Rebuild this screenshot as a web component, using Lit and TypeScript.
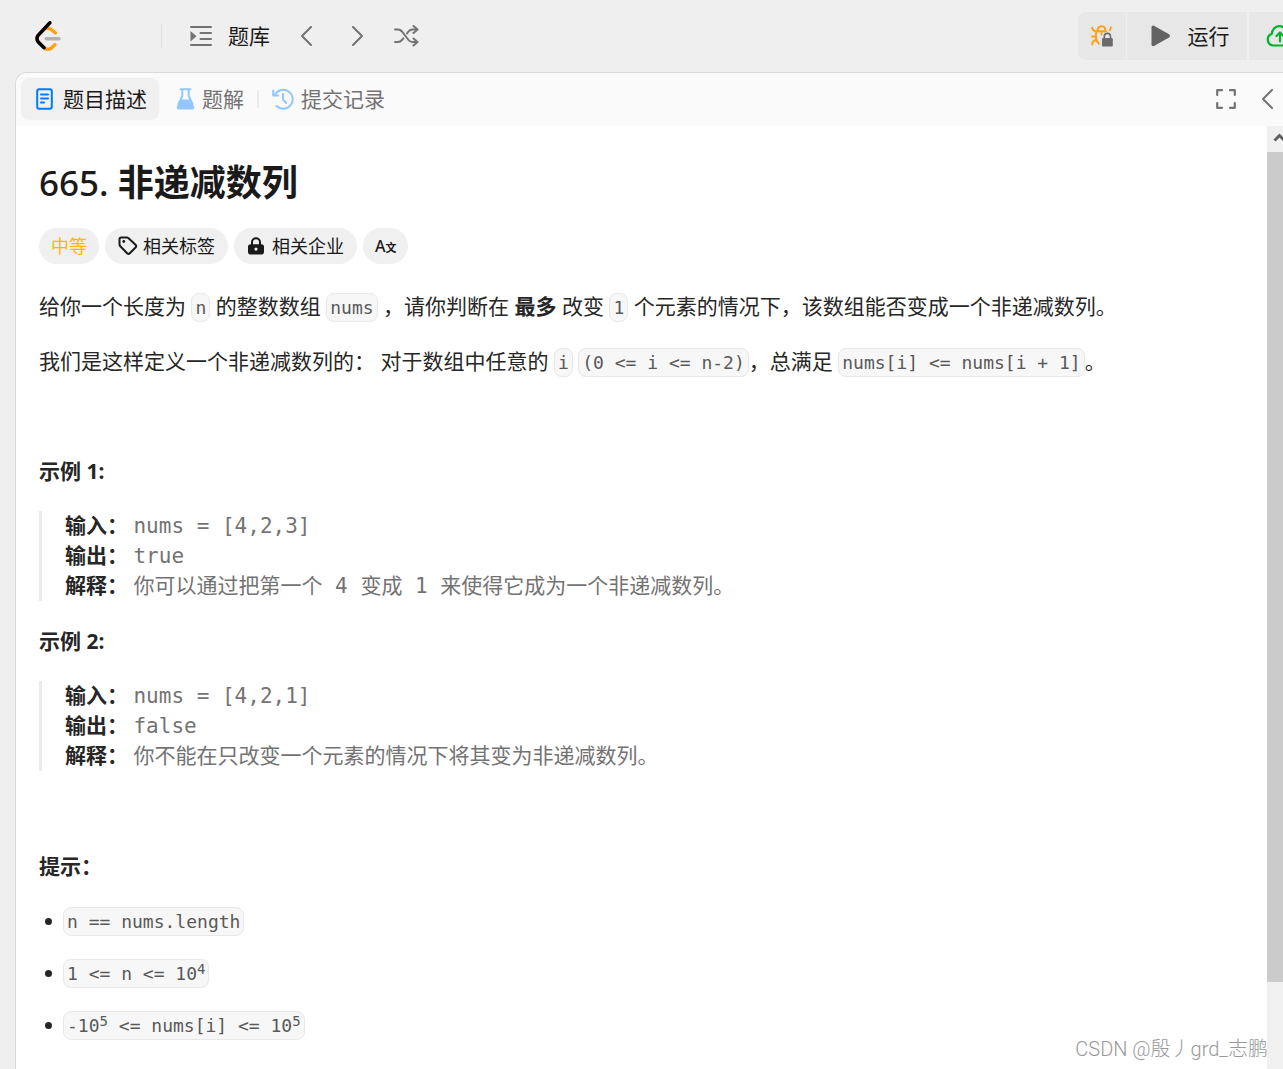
import { LitElement, html, css, TemplateResult } from "lit";
import { customElement } from "lit/decorators.js";

const listIcon = html`<svg class="icon" width="22" height="22" viewBox="0 0 22 22" aria-hidden="true">
  <path d="M1 2h20M10.500 8h10.500M10.500 14h10.500M1 20h20" fill="none" stroke="currentColor" stroke-width="2" stroke-linecap="round"/>
  <path d="M.5 6v10.500L6.500 11.200z" fill="currentColor"/></svg>`;

const chevron = (dir: "left" | "right") => html`<svg class="icon" width="12" height="20" viewBox="0 0 12 20" aria-hidden="true">
  <path d=${dir === "left" ? "M11 1L2 10l9 9" : "M1 1l9 9-9 9"} fill="none" stroke="currentColor" stroke-width="2" stroke-linecap="round" stroke-linejoin="round"/></svg>`;

const shuffleIcon = html`<svg class="icon" width="25" height="22" viewBox="0 0 25 22" aria-hidden="true">
  <g fill="none" stroke="currentColor" stroke-width="2" stroke-linecap="round" stroke-linejoin="round">
    <path d="M1 4.500h3c2 0 3 .8 4 2l6.500 8.500c1 1.300 2 2 4 2H23"/>
    <path d="M1 17h3c2 0 3-.8 4-2l1.300-1.700M13 8.500L14.500 6.500c1-1.300 2-2 4-2H23"/>
    <path d="M19.500 1L23.500 4.500l-4 3.500M19.500 13.500l4 3.500-4 3.500"/>
  </g></svg>`;

const logo = html`<svg class="icon" width="26" height="30" viewBox="0 0 95 111" aria-hidden="true">
  <path fill="#ffa116" d="M68.0063 83.0664C70.5 80.5764 74.5366 80.5829 77.0223 83.0809C79.508 85.579 79.5015 89.6226 77.0078 92.1127L65.9346 103.17C55.7187 113.371 39.06 113.519 28.6718 103.513C28.6117 103.456 23.9861 98.9201 8.72653 83.957C-1.42528 74.0029 -2.43665 58.0749 7.11648 47.8464L24.9282 28.7745C34.4095 18.6219 51.887 17.5122 62.7275 26.2789L78.9048 39.362C81.6444 41.5776 82.0723 45.5985 79.8606 48.3429C77.6488 51.0873 73.635 51.5159 70.8954 49.3003L54.7182 36.2173C49.0488 31.6325 39.1314 32.2622 34.2394 37.5006L16.4274 56.5727C11.7767 61.5522 12.2861 69.574 17.6456 74.8292C28.851 85.8169 37.4869 94.2846 37.4969 94.2942C42.8977 99.496 51.6304 99.4184 56.9331 94.1234L68.0063 83.0664Z"/>
  <path fill="#b3b3b3" d="M41.1067 72.0014C37.5858 72.0014 34.7314 69.1421 34.7314 65.615C34.7314 62.0879 37.5858 59.2286 41.1067 59.2286H88.1245C91.6454 59.2286 94.4997 62.0879 94.4997 65.615C94.4997 69.1421 91.6454 72.0014 88.1245 72.0014H41.1067Z"/>
  <path fill="#000" d="M49.9118 2.02335C52.3173 -0.55232 56.3517 -0.686894 58.9228 1.72277C61.494 4.13244 61.6284 8.17385 59.2229 10.7495L16.4276 56.5729C11.7768 61.552 12.2861 69.5738 17.6453 74.8292L37.4088 94.2091C39.9249 96.6764 39.968 100.72 37.505 103.24C35.042 105.761 31.0056 105.804 28.4895 103.337L8.72593 83.9567C-1.42529 74.0021 -2.43665 58.0741 7.1169 47.8463L49.9118 2.02335Z"/></svg>`;

const debugIcon = html`<svg class="icon" width="22" height="22" viewBox="0 0 22 22" aria-hidden="true">
  <g fill="none" stroke="#ffa116" stroke-width="2" stroke-linecap="round" stroke-linejoin="round">
    <path d="M6.500 6.300C6.500 3 8 1.200 10.500 1.200S14.500 3 14.500 6.300M5.500 6.300h9.500M10.500 6.500v3"/>
    <path d="M1.200 2.800c.3 2.200 1.500 3.300 4 3.800M19.800 2.500c0 1.200-.4 2-1 2.700M1 11.500H5M1.200 19.200c0-2 1.200-3.500 3.800-4.200M5.300 7C4.300 11 4.800 15.500 8 18.800"/>
  </g>
  <path d="M13.300 13.500V11.500a3.100 3.100 0 0 1 6.200 0v2" fill="none" stroke="#6b6b6b" stroke-width="1.600"/>
  <rect x="11" y="13" width="10.800" height="8.500" rx="1.300" fill="#6b6b6b"/></svg>`;

const playIcon = html`<svg class="icon" width="19" height="22" viewBox="0 0 19 22" aria-hidden="true">
  <path d="M.5 2.300C.5 1 1.800.2 3 .8l15 8.500c1.200.7 1.200 2.500 0 3.200l-15 8.500c-1.200.6-2.500-.1-2.500-1.500z" fill="#636363"/></svg>`;

const cloudIcon = html`<svg class="icon" width="28" height="22" viewBox="0 0 28 22" aria-hidden="true">
  <g fill="none" stroke="#01b328" stroke-width="2.200" stroke-linecap="round" stroke-linejoin="round">
    <path d="M7 20.500a6 6 0 0 1-1.200-11.600C6 4.500 9 1.200 13.200 1.200c3.300 0 6 2 7.200 5.100a7 7 0 0 1 .3 14.200z"/>
    <path d="M14 16.500V8M10.500 11L14 7.500l3.500 3.500"/>
  </g></svg>`;

const docIcon = html`<svg class="icon" width="17" height="22" viewBox="0 0 17 22" aria-hidden="true">
  <g fill="none" stroke="#007aff" stroke-width="2" stroke-linecap="round">
    <rect x="1.200" y="1.200" width="14.600" height="19.600" rx="2"/>
    <path d="M5 6.500h7M5 10.500h7M5 14.500h3"/>
  </g></svg>`;

const flaskIcon = html`<svg class="icon" width="19" height="22" viewBox="0 0 19 22" aria-hidden="true">
  <path d="M4.500 1.200h10M6.300 1.500V8L2.500 16M12.700 1.500V8l3.800 8" fill="none" stroke="#94c7ff" stroke-width="2" stroke-linecap="round"/>
  <path d="M5 11.500h9l4 6.800c.8 1.500-.1 3.200-1.800 3.200H2.800c-1.700 0-2.600-1.700-1.800-3.200z" fill="#94c7ff"/></svg>`;

const historyIcon = html`<svg class="icon" width="22" height="22" viewBox="0 0 22 22" aria-hidden="true">
  <g fill="none" stroke="#94c7ff" stroke-width="2" stroke-linecap="round" stroke-linejoin="round">
    <path d="M3 6.500A9.500 9.500 0 1 1 4.500 18M11 6v5.500l3.200 3.200"/>
    <path d="M1.200 2.500v5h5"/>
  </g></svg>`;

const expandIcon = html`<svg class="icon" width="20" height="20" viewBox="0 0 20 20" aria-hidden="true">
  <path d="M1.200 6V1.200H6M14 1.200h4.800V6M18.800 14v4.800H14M6 18.800H1.200V14" fill="none" stroke="currentColor" stroke-width="2.200" stroke-linecap="round" stroke-linejoin="round"/></svg>`;

const tagIcon = html`<svg class="icon" width="20" height="20" viewBox="0 0 20 20" aria-hidden="true">
  <path d="M1.500 3.200v5.300c0 .6.200 1.100.6 1.500l7 7.200c.8.8 1.900.8 2.700 0l5.700-5.700c.8-.8.8-1.900 0-2.700l-7.200-6.700c-.4-.4-.9-.6-1.400-.6H3.200c-1 0-1.700.7-1.700 1.700z" fill="none" stroke="currentColor" stroke-width="2" stroke-linejoin="round"/>
  <circle cx="5.800" cy="5.500" r="1.400" fill="currentColor"/></svg>`;

const lockIcon = html`<svg class="icon" width="18" height="18" viewBox="0 0 18 18" aria-hidden="true">
  <path d="M5 8V5.200a4 4 0 0 1 8 0V8" fill="none" stroke="currentColor" stroke-width="2"/>
  <path fill-rule="evenodd" fill="currentColor" d="M3.500 7.200h11A2.500 2.500 0 0 1 17 9.700v5A2.800 2.800 0 0 1 14.200 17.500H3.800A2.800 2.800 0 0 1 1 14.700v-5A2.500 2.500 0 0 1 3.500 7.200zM9 10.500a1.600 1.600 0 1 0 0 3.200 1.600 1.600 0 0 0 0-3.200z"/></svg>`;

interface Example {
  input: string;
  output: string;
  reason: string;
}

const examples: Example[] = [
  { input: "nums = [4,2,3]", output: "true", reason: "你可以通过把第一个 4 变成 1 来使得它成为一个非递减数列。" },
  { input: "nums = [4,2,1]", output: "false", reason: "你不能在只改变一个元素的情况下将其变为非递减数列。" },
];

const hints: TemplateResult[] = [
  html`n == nums.length`,
  html`1 &lt;= n &lt;= 10<sup>4</sup>`,
  html`-10<sup>5</sup> &lt;= nums[i] &lt;= 10<sup>5</sup>`,
];

@customElement("problem-toolbar")
export class ProblemToolbar extends LitElement {
  static styles = css`
    :host { display: flex; justify-content: space-between; align-items: center; height: 72px; flex: none; color: #737373; overflow: hidden; }
    .icon { display: block; flex: none; }
    .nav { display: flex; align-items: center; padding-left: 35px; }
    .rule { width: 1px; height: 24px; background: #e0e0e0; margin: 0 28px 0 100px; }
    a, button { display: flex; align-items: center; border: 0; padding: 0; background: none; font: inherit; color: inherit; text-decoration: none; }
    .library { gap: 16px; margin-right: 30px; }
    .label { color: #1a1a1a; }
    .next { margin: 0 30px 0 40px; }
    .actions { display: flex; gap: 1px; }
    .actions button { height: 48px; background: #e7e7e7; justify-content: center; }
    .actions .debug { width: 48px; border-radius: 8px 0 0 8px; }
    .actions .run { width: 120px; gap: 18px; padding-left: 6px; }
    .actions .submit { width: 34px; justify-content: flex-start; padding-left: 17px; margin-left: 1px; overflow: hidden; }
  `;
  render() {
    return html`
      <nav class="nav">
        <a href="#home" aria-label="LeetCode">${logo}</a>
        <span class="rule"></span>
        <a class="library" href="#problems">${listIcon}<span class="label">题库</span></a>
        <button aria-label="上一题">${chevron("left")}</button>
        <button class="next" aria-label="下一题">${chevron("right")}</button>
        <button aria-label="随机一题">${shuffleIcon}</button>
      </nav>
      <div class="actions">
        <button class="debug" aria-label="调试">${debugIcon}</button>
        <button class="run">${playIcon}<span class="label">运行</span></button>
        <button class="submit" aria-label="提交">${cloudIcon}</button>
      </div>`;
  }
}

@customElement("panel-tabs")
export class PanelTabs extends LitElement {
  static styles = css`
    :host { display: flex; align-items: center; justify-content: space-between; box-sizing: border-box; height: 53px; padding-bottom: 2px; flex: none; background: #fafafa; color: #737373; border-radius: 12px 0 0 0; }
    .icon { display: block; flex: none; }
    .tabs, .tools { display: flex; align-items: center; }
    .tabs { padding-left: 5px; }
    .tools { gap: 25px; padding-right: 10px; }
    button { display: flex; align-items: center; gap: 7px; height: 42px; border: 0; padding: 0; background: none; font: inherit; color: inherit; }
    .tab { padding: 0 13px 0 17px; border-radius: 8px; }
    .tab.active { background: #f0f0f0; color: #1a1a1a; padding: 0 12px 0 15px; gap: 10px; }
    .rule { width: 2px; height: 18px; background: #ebebeb; margin-right: -4px; }
  `;
  render() {
    return html`
      <div class="tabs" role="tablist">
        <button class="tab active" role="tab" aria-selected="true">${docIcon}题目描述</button>
        <button class="tab" role="tab" aria-selected="false">${flaskIcon}题解</button>
        <span class="rule"></span>
        <button class="tab" role="tab" aria-selected="false">${historyIcon}提交记录</button>
      </div>
      <div class="tools">
        <button aria-label="全屏">${expandIcon}</button>
        <button aria-label="收起">${chevron("left")}</button>
      </div>`;
  }
}

@customElement("problem-description")
export class ProblemDescription extends LitElement {
  static styles = css`
    :host { display: block; flex: 1; min-width: 0; padding: 32px 23px 24px; line-height: 31px; color: #262626; }
    .icon { display: block; flex: none; }
    h1 { margin: 0 0 20px; font-size: 36px; line-height: 50px; font-weight: 700; color: #1a1a1a; }
    .number { font-size: 35px; font-weight: 500; }
    .tags { display: flex; flex-wrap: wrap; gap: 6px; margin-bottom: 27px; }
    .tag { display: flex; align-items: center; gap: 5px; height: 36px; padding: 0 13px; border: 0; border-radius: 18px; background: #f0f0f0; font: inherit; font-size: 18px; color: #1a1a1a; }
    .tag.level { color: #ffb800; padding: 0 12px; }
    .tag.company { gap: 7px; }
    .tag.translate { gap: 0; padding: 0 12px; font-size: 16px; font-weight: 500; }
    .translate .han { font-size: 11px; font-weight: 700; padding-top: 3px; line-height: 20px; }
    p { margin: 0 0 24px; }
    code { padding: 3px; border: 1px solid #e8e8e8; border-radius: 8px; background: #f7f7f7; color: #595959; font-family: "DejaVu Sans Mono", "Liberation Mono", monospace; font-size: 18px; line-height: 21px; }
    sup { font-size: 14px; line-height: 0; vertical-align: baseline; position: relative; top: -6px; }
    pre { margin: 0 0 25px; padding-left: 23px; border-left: 3px solid #ebebeb; line-height: 30px; color: #737373; font-family: "DejaVu Sans Mono", "Noto Sans CJK SC", monospace; font-size: 21px; white-space: pre-wrap; }
    pre strong { font-family: "Noto Sans", "Noto Sans CJK SC", sans-serif; line-height: 20px; color: #262626; }
    ul { display: flex; flex-direction: column; gap: 21px; margin: 0; padding-left: 6px; list-style: none; }
    li { display: flex; align-items: center; gap: 11px; height: 31px; }
    li::before { content: ""; width: 7px; height: 7px; border-radius: 50%; background: #262626; }
  `;
  private example(e: Example, i: number) {
    return html`<p><strong>示例 ${i + 1}:</strong></p>
      <pre><strong>输入： </strong>${e.input}
<strong>输出： </strong>${e.output}
<strong>解释： </strong>${e.reason}</pre>`;
  }
  render() {
    return html`
      <h1><span class="number">665. </span>非递减数列</h1>
      <div class="tags">
        <span class="tag level">中等</span>
        <button class="tag">${tagIcon}相关标签</button>
        <button class="tag company">${lockIcon}相关企业</button>
        <button class="tag translate"><span>A</span><span class="han">文</span></button>
      </div>
      <p>给你一个长度为 <code>n</code> 的整数数组 <code>nums</code> ，请你判断在 <strong>最多</strong> 改变 <code>1</code> 个元素的情况下，该数组能否变成一个非递减数列。</p>
      <p>我们是这样定义一个非递减数列的： 对于数组中任意的 <code>i</code> <code>(0 &lt;= i &lt;= n-2)</code>，总满足 <code>nums[i] &lt;= nums[i + 1]</code>。</p>
      <p>&nbsp;</p>
      ${examples.map((e, i) => this.example(e, i))}
      <p>&nbsp;</p>
      <p><strong>提示：</strong></p>
      <ul>${hints.map((h) => html`<li><code>${h}</code></li>`)}</ul>`;
  }
}

@customElement("app-root")
export class AppRoot extends LitElement {
  static styles = css`
    :host { display: flex; flex-direction: column; min-height: 100vh; position: relative; overflow: hidden; background: #efefef; font-family: "Noto Sans", "Noto Sans CJK SC", sans-serif; font-size: 21px; line-height: 30px; }
    .panel { flex: 1; display: flex; flex-direction: column; margin-left: 15px; border: 1px solid #d9d9d9; border-width: 1px 0 0 1px; border-radius: 12px 0 0 0; background: #fff; }
    .body { flex: 1; display: flex; }
    .scrollbar { width: 16px; flex: none; display: flex; flex-direction: column; overflow: hidden; background: #f0f0f0; }
    .arrow { display: block; flex: none; margin: 6px 0 8px 6px; }
    .thumb { flex: 0 0 88%; background: #cbcbcb; }
    .watermark { position: absolute; right: 15px; bottom: 5px; font-family: Roboto, "Noto Sans CJK SC", sans-serif; font-size: 20px; line-height: 30px; font-weight: 300; color: #999; text-shadow: -1px -1px 0 #fff; }
  `;
  render() {
    return html`
      <problem-toolbar></problem-toolbar>
      <main class="panel">
        <panel-tabs></panel-tabs>
        <div class="body">
          <problem-description></problem-description>
          <div class="scrollbar" aria-hidden="true">
            <svg class="arrow" width="12" height="12" viewBox="0 0 12 12"><path d="M1.500 8.500L6.500 3.500l5 5" fill="none" stroke="#5f5f5f" stroke-width="3"/></svg>
            <div class="thumb"></div>
          </div>
        </div>
      </main>
      <div class="watermark">CSDN @殷丿grd_志鹏</div>`;
  }
}
